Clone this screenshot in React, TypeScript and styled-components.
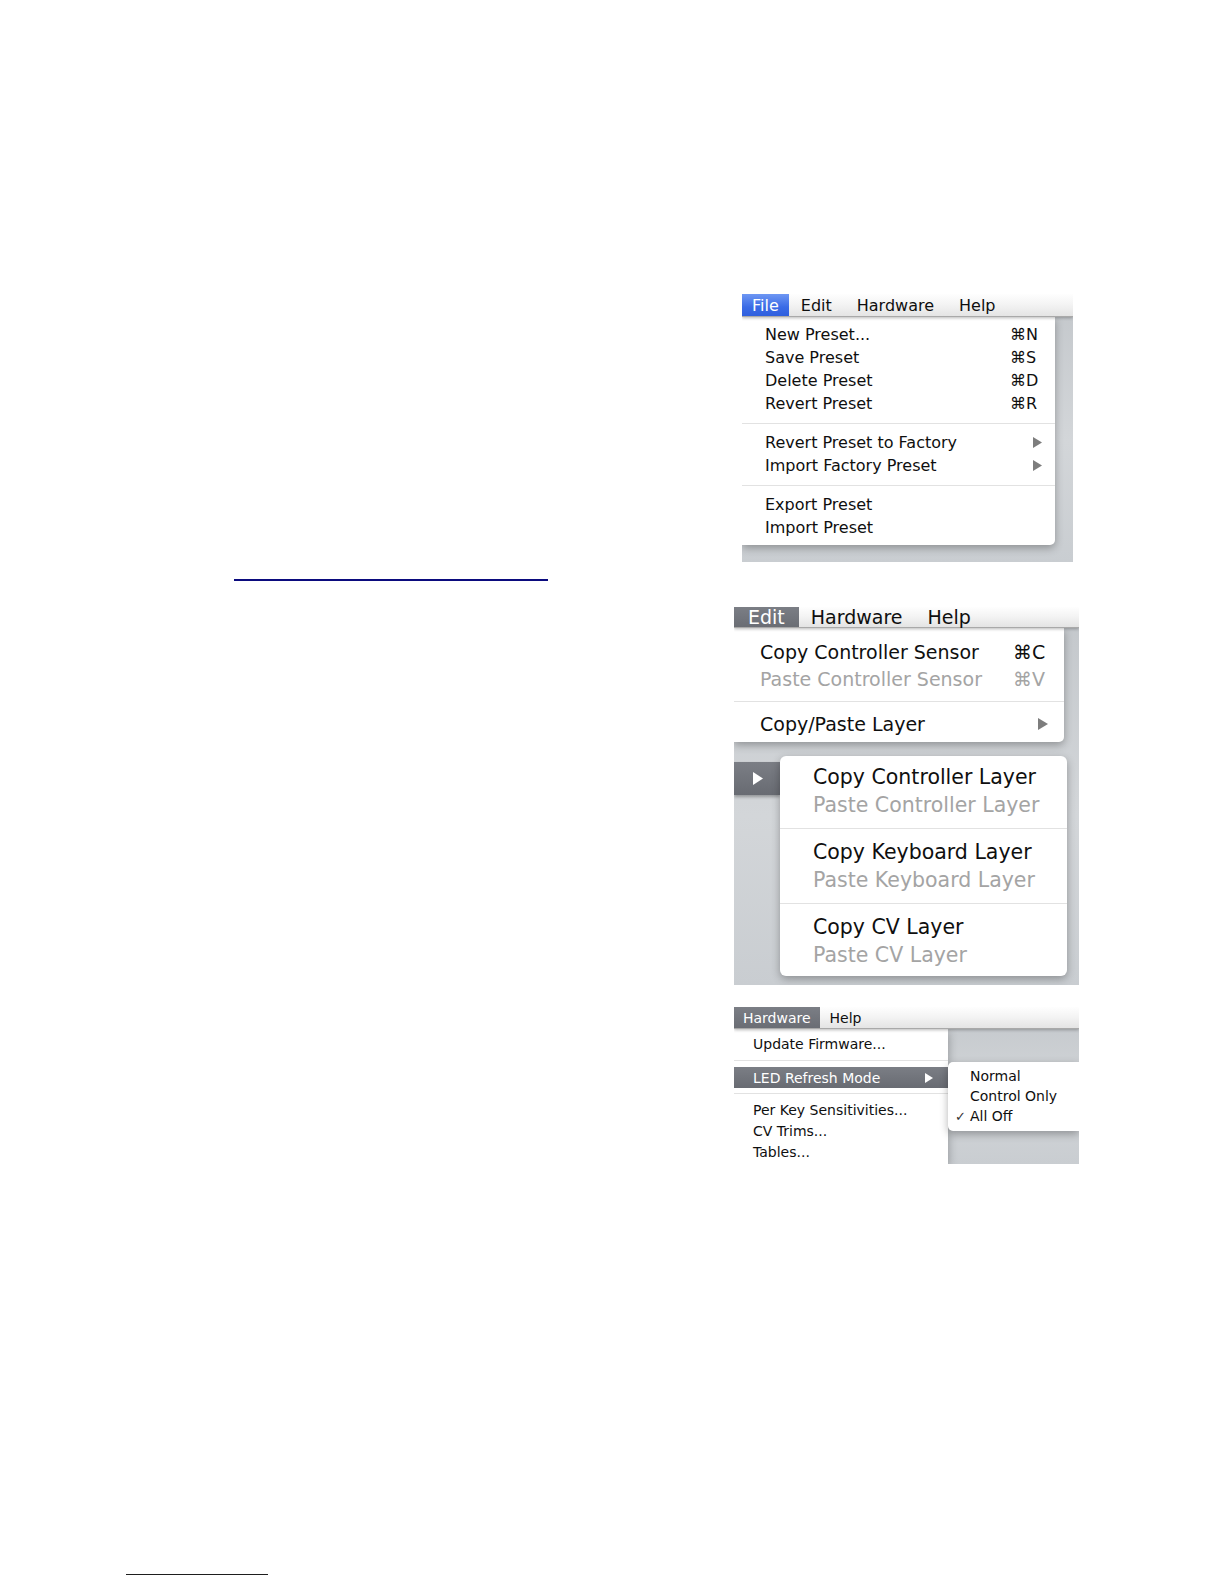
import React from "react";
import styled, { createGlobalStyle } from "styled-components";

const GlobalStyle = createGlobalStyle`
  html, body {
    margin: 0;
    padding: 0;
    background: #ffffff;
  }
  body {
    font-family: "DejaVu Sans", "Liberation Sans", sans-serif;
  }
`;

const Page = styled.div`
  width: 1224px;
  min-height: 1584px;
  box-sizing: border-box;
  padding-top: 294px;
  background: #ffffff;
  display: flex;
  flex-direction: column;
`;

const Upper = styled.div`
  display: grid;
  grid-template-columns: 734px 345px;
  align-items: start;
`;

const LinkRule = styled.div`
  margin: 285px 0 0 234px;
  width: 314px;
  height: 2px;
  background: #0b0b7e;
`;

const FootRule = styled.div`
  margin: 410px 0 0 126px;
  width: 142px;
  height: 1px;
  background: #1e1e1e;
`;

const Figures = styled.div`
  display: flex;
  flex-direction: column;
`;

const Shot = styled.div<{ $w: number; $ml?: number; $mt?: number }>`
  width: ${(p) => p.$w}px;
  margin-left: ${(p) => p.$ml ?? 0}px;
  margin-top: ${(p) => p.$mt ?? 0}px;
  overflow: hidden;
  display: flex;
  flex-direction: column;
  background: linear-gradient(180deg, #c3c7cb 0%, #d3d6d9 55%, #c9cdd1 100%);
`;

const MenuBar = styled.div<{ $h: number; $fs: number }>`
  position: relative;
  z-index: 3;
  display: flex;
  align-items: stretch;
  height: ${(p) => p.$h}px;
  box-sizing: border-box;
  border-bottom: 1px solid #a9a9a9;
  background: linear-gradient(180deg, #fefefe 0%, #f3f3f3 50%, #e4e4e4 100%);
  box-shadow: 0 1px 3px rgba(0, 0, 0, 0.28);
  font-size: ${(p) => p.$fs}px;
  color: #0f0f0f;
`;

const BarItem = styled.div<{ $pad: number; $active?: "blue" | "gray" }>`
  display: flex;
  align-items: center;
  padding: 0 ${(p) => p.$pad}px;
  white-space: nowrap;
  color: ${(p) => (p.$active ? "#ffffff" : "#0f0f0f")};
  background: ${(p) =>
    p.$active === "blue"
      ? "linear-gradient(180deg, #6e97f3 0%, #3a6be6 60%, #2f5fde 100%)"
      : p.$active === "gray"
      ? "linear-gradient(180deg, #7b7e85 0%, #6a6d74 100%)"
      : "transparent"};
`;

const Body = styled.div`
  display: flex;
  flex-direction: column;
  flex: 1;
`;

const BodyRow = styled.div`
  display: flex;
  align-items: flex-start;
`;

const Panel = styled.div<{ $w: number; $pt: number; $pb: number; $radius: string; $h?: number }>`
  position: relative;
  z-index: 2;
  width: ${(p) => p.$w}px;
  ${(p) => (p.$h ? `height: ${p.$h}px;` : "")}
  box-sizing: border-box;
  padding: ${(p) => p.$pt}px 0 ${(p) => p.$pb}px;
  background: #ffffff;
  border-radius: ${(p) => p.$radius};
  box-shadow: 0 3px 9px rgba(0, 0, 0, 0.3);
`;

const Row = styled.div<{
  $h: number;
  $pl: number;
  $pr: number;
  $fs: number;
  $dim?: boolean;
  $hl?: boolean;
}>`
  display: flex;
  align-items: center;
  justify-content: space-between;
  height: ${(p) => p.$h}px;
  padding: 0 ${(p) => p.$pr}px 0 ${(p) => p.$pl}px;
  font-size: ${(p) => p.$fs}px;
  white-space: nowrap;
  color: ${(p) => (p.$hl ? "#ffffff" : p.$dim ? "#a4a4a4" : "#0f0f0f")};
  background: ${(p) => (p.$hl ? "linear-gradient(180deg, #7b7e85 0%, #686b72 100%)" : "transparent")};
`;

const Label = styled.span`
  display: flex;
  align-items: center;
`;

const CheckSlot = styled.span`
  display: inline-block;
  width: 15px;
  font-size: 13px;
  color: #333;
`;

const Trail = styled.span<{ $w: number; $shift?: number }>`
  display: flex;
  align-items: center;
  justify-content: flex-start;
  width: ${(p) => p.$w}px;
  margin-right: ${(p) => -(p.$shift ?? 0)}px;
`;

const ArrowTrail = styled(Trail)`
  justify-content: flex-end;
`;

const Sep = styled.div<{ $h: number }>`
  height: ${(p) => p.$h}px;
  display: flex;
  align-items: center;
  &::after {
    content: "";
    flex: 1;
    height: 1px;
    background: #e2e2e2;
  }
`;

const Gap = styled.div<{ $h: number }>`
  height: ${(p) => p.$h}px;
  flex-shrink: 0;
`;

const Stub = styled.div`
  width: 46px;
  height: 33px;
  margin-top: 6px;
  box-sizing: border-box;
  padding-left: 19px;
  display: flex;
  align-items: center;
  background: linear-gradient(180deg, #7b7e85 0%, #686b72 100%);
  box-shadow: 0 2px 3px rgba(0, 0, 0, 0.3);
`;

const SideColumn = styled.div`
  flex: 1;
  display: flex;
  flex-direction: column;
`;

function Arrow({ w, h, color }: { w: number; h: number; color: string }) {
  return (
    <svg width={w} height={h} viewBox={`0 0 ${w} ${h}`}>
      <polygon points={`0,0 ${w},${h / 2} 0,${h}`} fill={color} />
    </svg>
  );
}

function FileShot() {
  const row = { $h: 23, $pl: 23, $pr: 15, $fs: 16 };
  return (
    <Shot $w={331} $ml={8}>
      <MenuBar $h={23} $fs={16}>
        <BarItem $pad={10} $active="blue">File</BarItem>
        <BarItem $pad={12}>Edit</BarItem>
        <BarItem $pad={13}>Hardware</BarItem>
        <BarItem $pad={12}>Help</BarItem>
      </MenuBar>
      <Body>
        <Panel $w={313} $pt={6} $pb={6} $radius="0 0 5px 0">
          <Row {...row}>
            <Label>New Preset...</Label>
            <Trail $w={30}>⌘N</Trail>
          </Row>
          <Row {...row}>
            <Label>Save Preset</Label>
            <Trail $w={30}>⌘S</Trail>
          </Row>
          <Row {...row}>
            <Label>Delete Preset</Label>
            <Trail $w={30}>⌘D</Trail>
          </Row>
          <Row {...row}>
            <Label>Revert Preset</Label>
            <Trail $w={30}>⌘R</Trail>
          </Row>
          <Sep $h={16} />
          <Row {...row}>
            <Label>Revert Preset to Factory</Label>
            <ArrowTrail $w={30} $shift={2}>
              <Arrow w={9} h={11} color="#7d7d7d" />
            </ArrowTrail>
          </Row>
          <Row {...row}>
            <Label>Import Factory Preset</Label>
            <ArrowTrail $w={30} $shift={2}>
              <Arrow w={9} h={11} color="#7d7d7d" />
            </ArrowTrail>
          </Row>
          <Sep $h={16} />
          <Row {...row}>
            <Label>Export Preset</Label>
          </Row>
          <Row {...row}>
            <Label>Import Preset</Label>
          </Row>
        </Panel>
        <Gap $h={17} />
      </Body>
    </Shot>
  );
}

function EditShot() {
  const row = { $h: 27, $pl: 26, $pr: 21, $fs: 19 };
  const sub = { $h: 28.5, $pl: 33, $pr: 10, $fs: 20.5 };
  return (
    <Shot $w={345} $mt={45}>
      <MenuBar $h={21} $fs={19}>
        <BarItem $pad={14} $active="gray">Edit</BarItem>
        <BarItem $pad={12}>Hardware</BarItem>
        <BarItem $pad={13}>Help</BarItem>
      </MenuBar>
      <Body>
        <Panel $w={330} $pt={10} $pb={5} $radius="0 0 5px 0">
          <Row {...row}>
            <Label>Copy Controller Sensor</Label>
            <Trail $w={30}>⌘C</Trail>
          </Row>
          <Row {...row} $dim>
            <Label>Paste Controller Sensor</Label>
            <Trail $w={30}>⌘V</Trail>
          </Row>
          <Sep $h={18} />
          <Row {...row}>
            <Label>Copy/Paste Layer</Label>
            <ArrowTrail $w={30} $shift={5}>
              <Arrow w={10} h={12} color="#7d7d7d" />
            </ArrowTrail>
          </Row>
        </Panel>
        <Gap $h={14} />
        <BodyRow>
          <Stub>
            <Arrow w={10} h={13} color="#ffffff" />
          </Stub>
          <Panel $w={287} $pt={6.5} $pb={6.5} $radius="6px">
            <Row {...sub}>
              <Label>Copy Controller Layer</Label>
            </Row>
            <Row {...sub} $dim>
              <Label>Paste Controller Layer</Label>
            </Row>
            <Sep $h={18} />
            <Row {...sub}>
              <Label>Copy Keyboard Layer</Label>
            </Row>
            <Row {...sub} $dim>
              <Label>Paste Keyboard Layer</Label>
            </Row>
            <Sep $h={18} />
            <Row {...sub}>
              <Label>Copy CV Layer</Label>
            </Row>
            <Row {...sub} $dim>
              <Label>Paste CV Layer</Label>
            </Row>
          </Panel>
        </BodyRow>
        <Gap $h={9} />
      </Body>
    </Shot>
  );
}

function HardwareShot() {
  const row = { $h: 21, $pl: 19, $pr: 15, $fs: 14 };
  const sub = { $h: 20, $pl: 7, $pr: 8, $fs: 14 };
  return (
    <Shot $w={345} $mt={22}>
      <MenuBar $h={22} $fs={14}>
        <BarItem $pad={9} $active="gray">Hardware</BarItem>
        <BarItem $pad={10}>Help</BarItem>
      </MenuBar>
      <BodyRow>
        <Panel $w={214} $h={135} $pt={4} $pb={0} $radius="0">
          <Row {...row}>
            <Label>Update Firmware...</Label>
          </Row>
          <Sep $h={13} />
          <Row {...row} $hl>
            <Label>LED Refresh Mode</Label>
            <Arrow w={8} h={10} color="#ffffff" />
          </Row>
          <Sep $h={11} />
          <Row {...row}>
            <Label>Per Key Sensitivities...</Label>
          </Row>
          <Row {...row}>
            <Label>CV Trims...</Label>
          </Row>
          <Row {...row}>
            <Label>Tables...</Label>
          </Row>
        </Panel>
        <SideColumn>
          <Gap $h={33} />
          <Panel $w={131} $pt={4} $pb={5} $radius="5px 0 0 5px">
            <Row {...sub}>
              <Label>
                <CheckSlot />
                Normal
              </Label>
            </Row>
            <Row {...sub}>
              <Label>
                <CheckSlot />
                Control Only
              </Label>
            </Row>
            <Row {...sub}>
              <Label>
                <CheckSlot>✓</CheckSlot>
                All Off
              </Label>
            </Row>
          </Panel>
        </SideColumn>
      </BodyRow>
    </Shot>
  );
}

export default function App() {
  return (
    <>
      <GlobalStyle />
      <Page>
        <Upper>
          <div>
            <LinkRule />
          </div>
          <Figures>
            <FileShot />
            <EditShot />
            <HardwareShot />
          </Figures>
        </Upper>
        <FootRule />
      </Page>
    </>
  );
}
